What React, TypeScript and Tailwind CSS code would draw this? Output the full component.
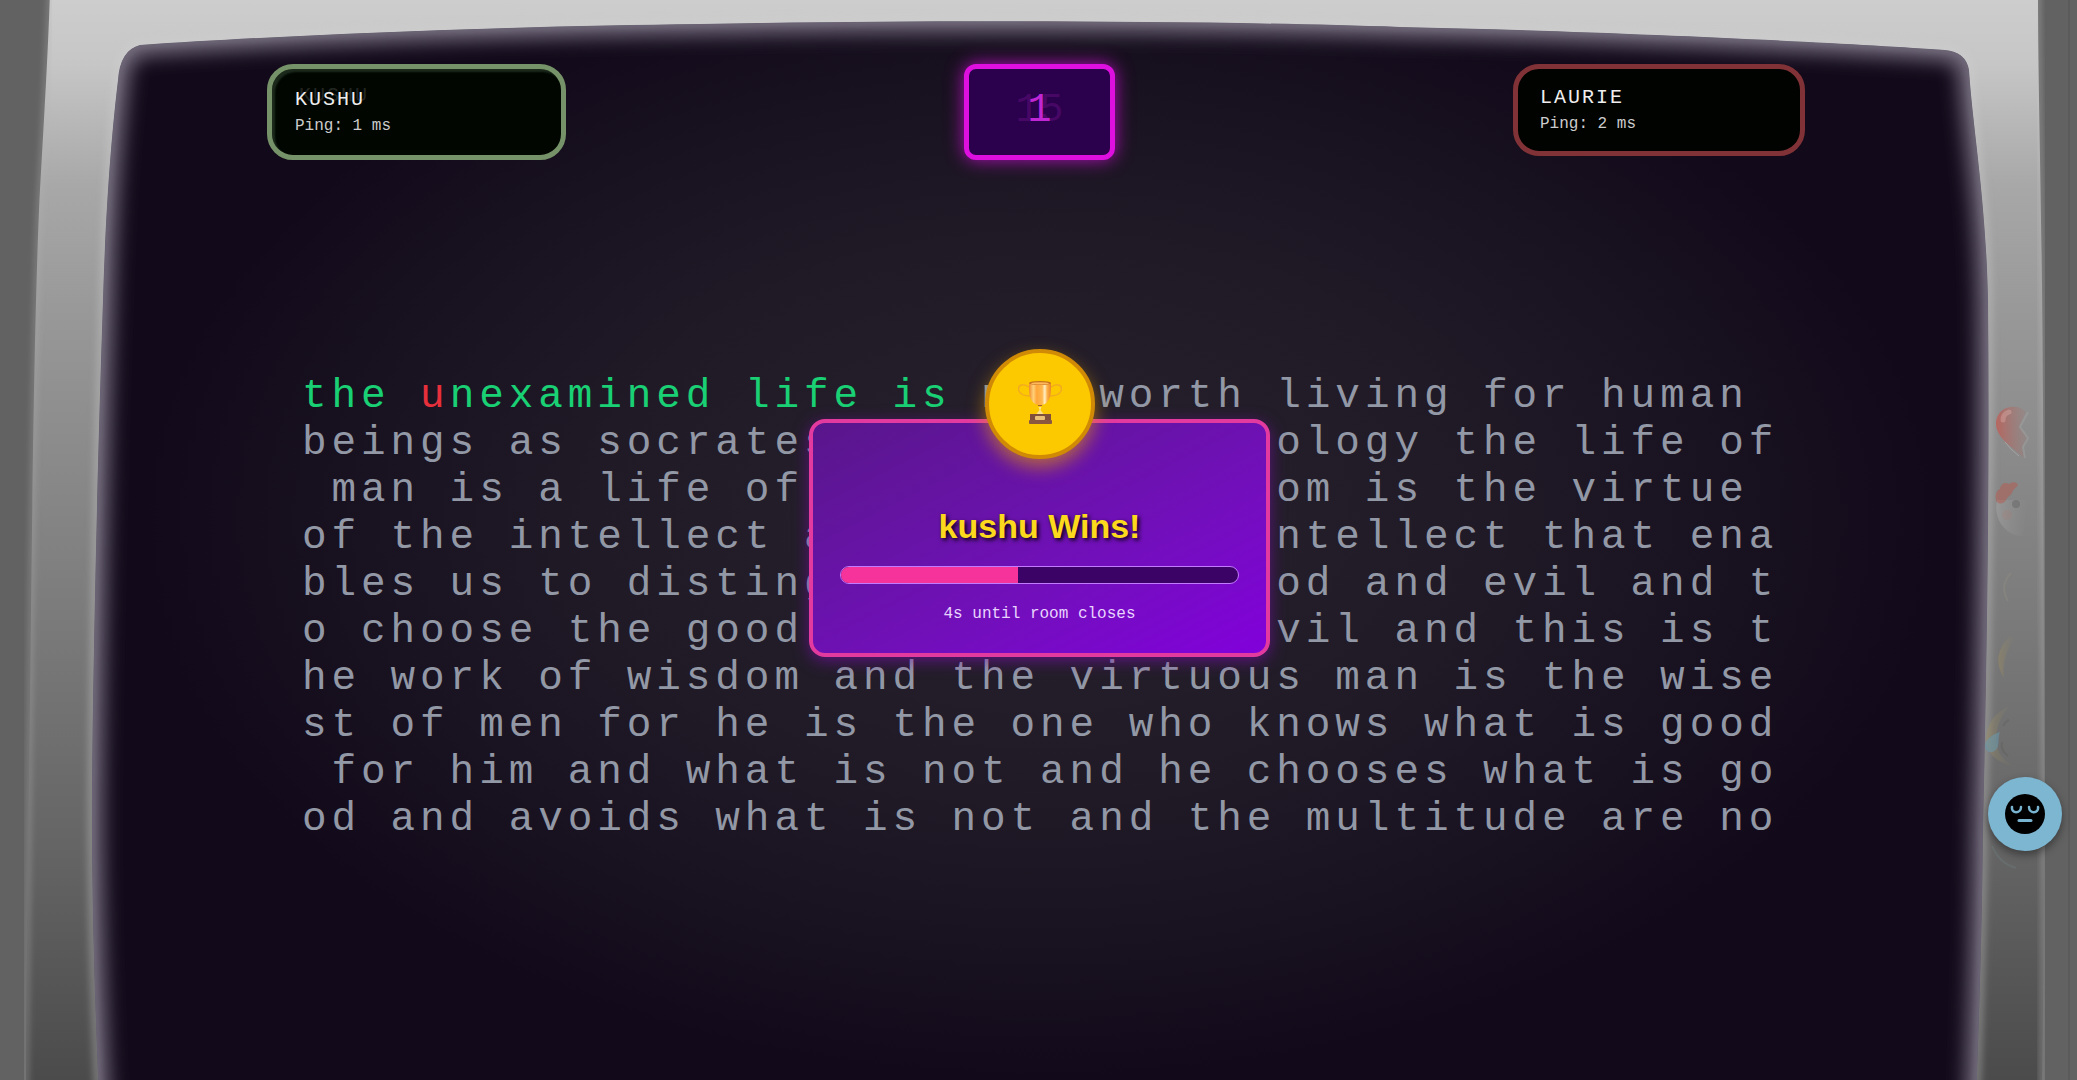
import React from "react";

const mono = "font-['Liberation_Mono',monospace]";

const lines = [
  " worth living for human ",
  "beings as socrates said in the apology the life of",
  " man is a life of wisdom and wisdom is the virtue ",
  "of the intellect and it is this intellect that ena",
  "bles us to distinguish between good and evil and t",
  "o choose the good and avoid the evil and this is t",
  "he work of wisdom and the virtuous man is the wise",
  "st of men for he is the one who knows what is good",
  " for him and what is not and he chooses what is go",
  "od and avoids what is not and the multitude are no",
];

const screenPath =
  "M140 45 C300 34 520 26 700 24 C900 20 1200 20 1400 27 C1600 31 1850 43 1945 50 Q1966 52 1969 70 C1973 130 1986 200 1988 300 C1990 500 1986 700 1983 830 C1982 950 1978 1060 1972 1200 L104 1200 C96 1060 91 900 92 780 C94 600 99 420 103 300 C106 200 112 130 118 80 Q120 50 140 45 Z";

function Monitor() {
  return (
    <svg
      aria-hidden="true"
      className="absolute inset-0 h-full w-full"
      viewBox="0 0 2077 1080"
      preserveAspectRatio="none"
    >
      <defs>
        <linearGradient id="bezel" gradientUnits="userSpaceOnUse" x1="0" y1="0" x2="0" y2="1080">
          <stop offset="0" stopColor="#cdcdcd" />
          <stop offset="0.06" stopColor="#c6c6c6" />
          <stop offset="0.17" stopColor="#a8a8a8" />
          <stop offset="0.3" stopColor="#979797" />
          <stop offset="0.55" stopColor="#7d7d7d" />
          <stop offset="0.8" stopColor="#636363" />
          <stop offset="1" stopColor="#4b4b4b" />
        </linearGradient>
        <radialGradient id="glass" gradientUnits="userSpaceOnUse" cx="0" cy="0" r="1" gradientTransform="translate(1040 520) scale(900 560)">
          <stop offset="0" stopColor="#27222c" />
          <stop offset="0.5" stopColor="#201a27" />
          <stop offset="1" stopColor="#120a1a" />
        </radialGradient>
        <filter id="soft" x="-5%" y="-5%" width="110%" height="110%">
          <feGaussianBlur stdDeviation="10" />
        </filter>
        <filter id="thin" x="-5%" y="-5%" width="110%" height="110%">
          <feGaussianBlur stdDeviation="3" />
        </filter>
        <clipPath id="screen">
          <path d={screenPath} />
        </clipPath>
      </defs>
      <rect width="2077" height="1080" fill="#626262" />
      <path d="M50 -10 C48 60 42 150 39 210 C34 330 32 520 30 700 C28 850 26 1000 26 1090 H2042 C2045 900 2044 600 2043 400 C2042 200 2038 100 2038 -10 Z" fill="url(#bezel)" />
      <path d="M50 -10 C48 60 42 150 39 210 C34 330 32 520 30 700 C28 850 26 1000 26 1090" fill="none" stroke="#b4b4b4" strokeOpacity="0.5" strokeWidth="4" filter="url(#thin)" />
      <path d="M2042 1090 C2045 900 2044 600 2043 400 C2042 200 2038 100 2038 -10" fill="none" stroke="#c8c8c8" strokeOpacity="0.5" strokeWidth="4" filter="url(#thin)" />
      <path d="M2069 0 V1080" stroke="#555555" strokeWidth="1" />
      <path d={screenPath} fill="none" stroke="#d0d0d0" strokeOpacity="0.3" strokeWidth="10" filter="url(#thin)" />
      <g clipPath="url(#screen)">
        <path d={screenPath} fill="url(#glass)" />
        <path d={screenPath} fill="none" stroke="#8a8293" strokeOpacity="0.9" strokeWidth="20" filter="url(#soft)" />
        <path d={screenPath} fill="none" stroke="#8a8492" strokeOpacity="0.5" strokeWidth="6" filter="url(#thin)" />
      </g>
    </svg>
  );
}

function Trophy() {
  return (
    <svg aria-hidden="true" className="h-11 w-11" viewBox="0 0 44 44">
      <defs>
        <linearGradient id="cup" x1="0" x2="1">
          <stop offset="0" stopColor="#f08a2c" />
          <stop offset="0.2" stopColor="#ffd07a" />
          <stop offset="0.35" stopColor="#ffa63a" />
          <stop offset="0.6" stopColor="#ffb850" />
          <stop offset="0.72" stopColor="#fff0c8" />
          <stop offset="0.82" stopColor="#ffb347" />
          <stop offset="1" stopColor="#e8822a" />
        </linearGradient>
      </defs>
      <path d="M11 7C4 2 -1 6 1 11c2 4 7 5 11 5M33 7c7-5 12-1 10 4-2 4-7 5-11 5" fill="none" stroke="#f3ac1e" strokeWidth="1.500" />
      <path d="M11 3c0 8 0 14 3 18 2 3 5 4 8 4s6-1 8-4c3-4 3-10 3-18Z" fill="url(#cup)" />
      <ellipse cx="22" cy="3" rx="11" ry="2" fill="#c4701f" />
      <ellipse cx="22" cy="3.400" rx="9" ry="1.200" fill="#ffb85a" />
      <path d="M20 25h4v1h-4Z" fill="#a8602a" />
      <path d="M20.500 27h3l-1 3 3 4h-7l3-4Z" fill="#ffe08a" />
      <path d="M12 34h21v6H12Z" fill="#80503a" />
      <rect x="17" y="36" width="10" height="4" rx="1" fill="#e8c07a" />
      <rect x="11" y="40" width="23" height="4" rx="1" fill="#8a5840" />
    </svg>
  );
}

function FloatingReactions() {
  return (
    <svg aria-hidden="true" className="absolute right-[17px] bottom-0 h-[480px] w-20" viewBox="1980 400 80 480">
      <defs>
        <linearGradient id="fadeHeart" x1="0" x2="1">
          <stop offset="0" stopColor="#c8554c" stopOpacity="0.7" />
          <stop offset="1" stopColor="#a8706a" stopOpacity="0.15" />
        </linearGradient>
        <linearGradient id="fadeFace" x1="0" x2="1">
          <stop offset="0" stopColor="#b0b0b0" stopOpacity="0.4" />
          <stop offset="1" stopColor="#9a9a9a" stopOpacity="0" />
        </linearGradient>
        <linearGradient id="fadeGold" x1="0" x2="1">
          <stop offset="0" stopColor="#a3905a" stopOpacity="0.4" />
          <stop offset="1" stopColor="#8a8468" stopOpacity="0" />
        </linearGradient>
      </defs>
      <path d="M2026 412C2018 403 1998 405 1996 422C1995 438 2013 447 2024 458L2022 447L2027 438L2019 427Z" fill="url(#fadeHeart)" />
      <path d="M2028 412L2020 427L2028 438L2023 447L2025 458" fill="none" stroke="#b0b0b0" strokeOpacity="0.3" strokeWidth="2" />
      <path d="M2003 420q0-6 6-8" stroke="#dfb0aa" strokeOpacity="0.4" strokeWidth="5" strokeLinecap="round" fill="none" />
      <path d="M2005 442q6 8 14 14" stroke="#c8c8c8" strokeOpacity="0.4" strokeWidth="1" fill="none" />
      <path d="M1997 500C1993 520 2006 536 2023 536L2028 500Z" fill="url(#fadeFace)" />
      <path d="M1996 500c-1-5 0-9 4-11 1-6 6-7 9-5 4-3 8-2 9 1-2 3-5 4-6 8-2 3-5 4-6 7-2 4-9 5-10 0Z" fill="#b8584e" fillOpacity="0.5" />
      <circle cx="2016" cy="504" r="4" fill="#666666" fillOpacity="0.5" />
      <circle cx="2007" cy="515" r="5" fill="#b0776f" fillOpacity="0.2" />
      <path d="M2011 573q-12 12-3 28" stroke="#948f83" strokeWidth="2" strokeOpacity="0.4" fill="none" />
      <path d="M2010 636q-20 20-6 42q-3-22 12-40Z" fill="url(#fadeGold)" />
      <path d="M2010 706q-24 10-24 36q4 20 30 25q-18-8-20-25q0-22 14-36Z" fill="url(#fadeGold)" />
      <path d="M2000 732c-9 3-15 8-15 14 0 8 11 8 13 0 1-5 0-9 2-14Z" fill="#6a98aa" fillOpacity="0.6" />
      <path d="M2003 726q3-5 6-6M2002 742q-2 8 6 14" stroke="#5b5b55" strokeOpacity="0.3" strokeWidth="2" fill="none" />
      <path d="M1992 846q8 18 24 22" stroke="#6f8084" strokeOpacity="0.3" strokeWidth="2" fill="none" />
    </svg>
  );
}

function SleepyFace() {
  return (
    <svg aria-hidden="true" className="h-10 w-10" viewBox="0 0 40 40">
      <circle cx="20" cy="20" r="20" fill="#000000" />
      <path d="M7 13c-1 7 9 7 9 0M24 13c0 7 10 7 9 0" fill="none" stroke="#78b4d0" strokeWidth="2.500" strokeLinecap="round" />
      <path d="M14 26.500h12" stroke="#78b4d0" strokeWidth="3" strokeLinecap="round" />
    </svg>
  );
}

export default function App() {
  return (
    <div className={`relative min-h-screen overflow-hidden bg-[#626262] ${mono}`}>
      <Monitor />
      <div className="relative">
        <header className="flex items-start justify-between pt-16 pr-[272px] pl-[267px]">
          <section className="w-[299px] rounded-[26px] border-5 border-[#769268] bg-[#010601] px-[23px] py-[17px] text-white shadow-[inset_3px_3px_2px_#1c2a1c]">
            <div className="relative text-[20px] leading-7 tracking-[2px] text-[#eeeeee]">
              <span aria-hidden="true" className="absolute -top-1 left-1 text-white/15">KUSHU</span>
              <h2 className="relative">KUSHU</h2>
            </div>
            <p className="text-base leading-6 text-[#cccccc]">Ping: 1 ms</p>
          </section>
          <div className="relative flex h-24 w-[151px] justify-center rounded-xl border-5 border-[#dd10e0] bg-[#2b004c] pt-[22px] text-[40px] leading-10 text-[#c026d3] shadow-[0_0_18px_#b010b8]">
            <span aria-hidden="true" className="absolute text-[#c026d3]/20">15</span>
            <span>1</span>
          </div>
          <section className="w-[292px] rounded-[26px] border-5 border-[#803236] bg-[#010301] px-[22px] py-[15px]">
            <h2 className="text-[20px] leading-7 tracking-[2px] text-[#eeeeee]">LAURIE</h2>
            <p className="text-base leading-6 text-[#cccccc]">Ping: 2 ms</p>
          </section>
        </header>
        <main className="mt-[213px] ml-[302px] text-[41px] leading-[47px] tracking-[0.12em] whitespace-pre text-[#9298a5]">
          {lines.map((line, i) => (
            <p key={i}>
              {i === 0 && (
                <>
                  <span className="text-[#1ad074]">the </span>
                  <span className="text-[#e7303b]">u</span>
                  <span className="text-[#1ad074]">nexamined life is </span>
                  not
                </>
              )}
              {line}
            </p>
          ))}
        </main>
      </div>

      <div className="absolute inset-0 flex items-center justify-center pb-1 pl-0.5">
        <div role="dialog" aria-labelledby="winner" className="relative w-[461px] rounded-2xl border-4 border-[#e23a9f] bg-linear-to-br from-[#59168b] to-[#8200db] px-[27px] pt-[83px] pb-[27px] text-center shadow-[0_4px_16px_#7a10b0a0]">
          <div className="absolute -top-[74px] left-1/2 flex size-[110px] -translate-x-1/2 items-center justify-center rounded-full border-4 border-[#d08a06] bg-[#fcc800] pb-1 shadow-[0_8px_18px_#e69a0499]">
            <Trophy />
          </div>
          <h1 id="winner" className="font-['Liberation_Sans',sans-serif] text-[34px] leading-10 font-bold text-[#fcd91c] [text-shadow:2px_2px_4px_#000000]">
            kushu Wins!
          </h1>
          <div className="mt-5 h-[18px] overflow-hidden rounded-full border border-[#c27aff] bg-[#3c0366]">
            <div className="h-full bg-[#f6339a]" style={{ width: "44.5%" }} />
          </div>
          <p className="mt-[18px] text-base leading-6 text-[#e9d4ff]">4s until room closes</p>
        </div>
      </div>

      <div className="absolute top-[400px] right-0 h-[480px] w-24">
        <FloatingReactions />
        <button type="button" aria-label="Reactions" className="absolute right-[15px] bottom-[29px] flex size-[74px] items-center justify-center rounded-full bg-[#7db6d1] shadow-[0_4px_8px_#00000066]">
          <SleepyFace />
        </button>
      </div>
    </div>
  );
}
